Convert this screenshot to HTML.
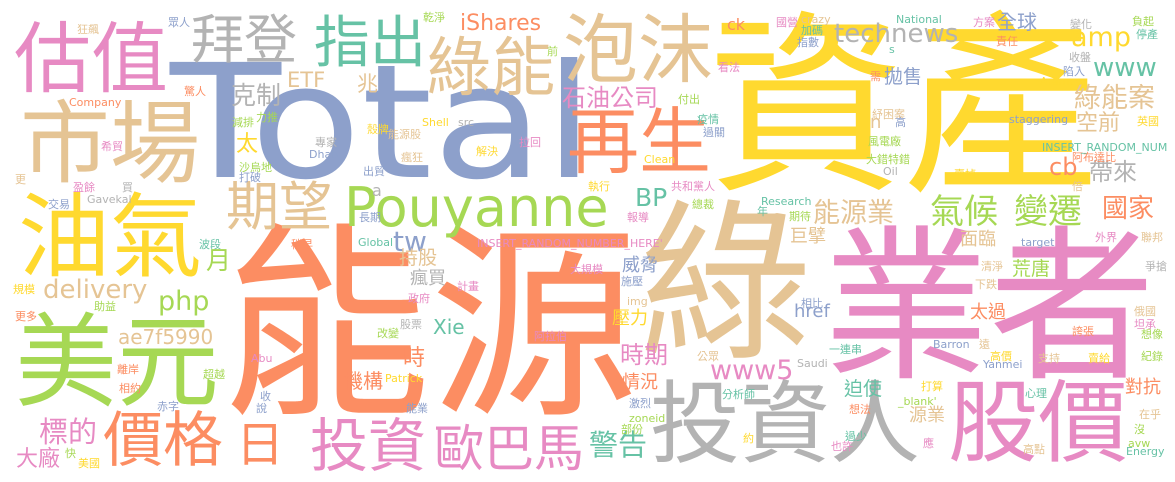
<!DOCTYPE html>
<html><head><meta charset="utf-8"><style>
html,body{margin:0;padding:0;background:#fff;}
#c{position:relative;width:1175px;height:482px;overflow:hidden;background:#fff;}
.w{position:absolute;line-height:1;white-space:nowrap;font-family:"Noto Sans CJK TC","Noto Sans CJK SC",sans-serif;}
.l{position:absolute;line-height:1;white-space:nowrap;font-family:"DejaVu Sans","Liberation Sans",sans-serif;}
.t{color:#66c2a5}.o{color:#fc8d62}.b{color:#8da0cb}.p{color:#e78ac3}.g{color:#a6d854}.y{color:#ffd92f}.n{color:#e5c494}.r{color:#b3b3b3}
.s{font-size:11px}
</style></head><body><div id="c">
<span class="l b" style="left:170px;top:44px;font-size:158px;transform:scaleX(1.15);transform-origin:0 0">Total</span>
<span class="w y" style="left:708px;top:-6px;font-size:195px;">資產</span>
<span class="w o" style="left:222px;top:204px;font-size:208px;">能源</span>
<span class="w n" style="left:640px;top:183px;font-size:172px;">綠</span>
<span class="w p" style="left:823px;top:210px;font-size:166px;">業者</span>
<span class="w p" style="left:14px;top:15px;font-size:77px;">估值</span>
<span class="w n" style="left:20px;top:91px;font-size:90px;">市場</span>
<span class="w r" style="left:191px;top:10px;font-size:53px;">拜登</span>
<span class="w t" style="left:314px;top:11px;font-size:56px;">指出</span>
<span class="l o" style="left:460px;top:13px;font-size:22px;">iShares</span>
<span class="w n" style="left:427px;top:31px;font-size:64px;">綠能</span>
<span class="w n" style="left:563px;top:6px;font-size:75px;">泡沫</span>
<span class="w o" style="left:567px;top:100px;font-size:72px;">再生</span>
<span class="w p" style="left:562px;top:84px;font-size:24px;">石油公司</span>
<span class="l n" style="left:287px;top:70px;font-size:21px;">ETF</span>
<span class="w n" style="left:357px;top:73px;font-size:21px;">兆</span>
<span class="w r" style="left:231px;top:82px;font-size:25px;">克制</span>
<span class="w y" style="left:236px;top:131px;font-size:22px;">太</span>
<span class="w y" style="left:18px;top:184px;font-size:92px;">油氣</span>
<span class="w n" style="left:226px;top:177px;font-size:53px;">期望</span>
<span class="l g" style="left:344px;top:181px;font-size:54px;">Pouyanne</span>
<span class="l b" style="left:393px;top:228px;font-size:28px;">tw</span>
<span class="w g" style="left:15px;top:304px;font-size:102px;">美元</span>
<span class="w g" style="left:206px;top:247px;font-size:25px;">月</span>
<span class="l n" style="left:43px;top:277px;font-size:26px;">delivery</span>
<span class="l g" style="left:158px;top:288px;font-size:27px;">php</span>
<span class="l n" style="left:118px;top:327px;font-size:20px;">ae7f5990</span>
<span class="w n" style="left:399px;top:247px;font-size:19px;">持股</span>
<span class="w r" style="left:410px;top:268px;font-size:18px;">瘋買</span>
<span class="l t" style="left:433px;top:317px;font-size:20px;">Xie</span>
<span class="w o" style="left:403px;top:345px;font-size:22px;">時</span>
<span class="w o" style="left:343px;top:370px;font-size:20px;">機構</span>
<span class="w p" style="left:39px;top:416px;font-size:29px;">標的</span>
<span class="w p" style="left:16px;top:446px;font-size:22px;">大廠</span>
<span class="w o" style="left:103px;top:406px;font-size:60px;">價格</span>
<span class="w o" style="left:236px;top:416px;font-size:48px;">日</span>
<span class="w p" style="left:310px;top:412px;font-size:58px;">投資</span>
<span class="w p" style="left:434px;top:420px;font-size:50px;">歐巴馬</span>
<span class="w t" style="left:589px;top:429px;font-size:29px;">警告</span>
<span class="w r" style="left:650px;top:371px;font-size:90px;">投資人</span>
<span class="w p" style="left:948px;top:370px;font-size:90px;">股價</span>
<span class="w n" style="left:790px;top:226px;font-size:18px;">巨擘</span>
<span class="w n" style="left:960px;top:229px;font-size:18px;">面臨</span>
<span class="w b" style="left:622px;top:255px;font-size:18px;">威脅</span>
<span class="w y" style="left:612px;top:308px;font-size:18px;">壓力</span>
<span class="w p" style="left:620px;top:341px;font-size:24px;">時期</span>
<span class="l p" style="left:710px;top:357px;font-size:27px;">www5</span>
<span class="w o" style="left:622px;top:372px;font-size:18px;">情況</span>
<span class="l b" style="left:794px;top:303px;font-size:18px;">href</span>
<span class="w o" style="left:970px;top:302px;font-size:18px;">太過</span>
<span class="w g" style="left:1012px;top:258px;font-size:19px;">荒唐</span>
<span class="w t" style="left:844px;top:378px;font-size:19px;">迫使</span>
<span class="w n" style="left:909px;top:405px;font-size:18px;">源業</span>
<span class="w o" style="left:1125px;top:377px;font-size:18px;">對抗</span>
<span class="l r" style="left:834px;top:21px;font-size:26px;">technews</span>
<span class="w b" style="left:997px;top:11px;font-size:20px;">全球</span>
<span class="l y" style="left:1071px;top:24px;font-size:27px;">amp</span>
<span class="l o" style="left:727px;top:17px;font-size:16px;">ck</span>
<span class="w b" style="left:884px;top:66px;font-size:19px;">拋售</span>
<span class="l t" style="left:1093px;top:55px;font-size:26px;">www</span>
<span class="w n" style="left:1074px;top:82px;font-size:27px;">綠能案</span>
<span class="w n" style="left:1076px;top:110px;font-size:22px;">空前</span>
<span class="l n" style="left:870px;top:114px;font-size:18px;">n</span>
<span class="l o" style="left:1049px;top:155px;font-size:24px;">cb</span>
<span class="w r" style="left:1089px;top:158px;font-size:24px;">帶來</span>
<span class="l t" style="left:635px;top:185px;font-size:25px;">BP</span>
<span class="w n" style="left:813px;top:197px;font-size:27px;">能源業</span>
<span class="w g" style="left:930px;top:192px;font-size:34px;">氣候</span>
<span class="w g" style="left:1014px;top:192px;font-size:34px;">變遷</span>
<span class="w o" style="left:1102px;top:194px;font-size:26px;">國家</span>
<span class="l r" style="left:372px;top:183px;font-size:16px;">a</span>
<span class="l p" style="left:477px;top:238px;font-size:11px;">INSERT_RANDOM_NUMBER_HERE'</span>
<span class="w n s" style="left:77px;top:24px">狂飆</span>
<span class="w b s" style="left:168px;top:17px">眾人</span>
<span class="w g s" style="left:423px;top:12px">乾淨</span>
<span class="w g s" style="left:547px;top:46px">前</span>
<span class="w o s" style="left:184px;top:86px">驚人</span>
<span class="l o s" style="left:69px;top:97px">Company</span>
<span class="w g s" style="left:232px;top:117px">減排</span>
<span class="w g s" style="left:256px;top:112px">力推</span>
<span class="w y s" style="left:367px;top:124px">殼牌</span>
<span class="l y s" style="left:422px;top:117px">Shell</span>
<span class="l r s" style="left:458px;top:117px">src</span>
<span class="w n s" style="left:388px;top:129px">能源股</span>
<span class="w r s" style="left:315px;top:137px">專家</span>
<span class="l b s" style="left:309px;top:149px">Dhabi</span>
<span class="w n s" style="left:401px;top:152px">瘋狂</span>
<span class="w y s" style="left:476px;top:146px">解決</span>
<span class="w p s" style="left:519px;top:137px">拉回</span>
<span class="w p s" style="left:101px;top:141px">希貿</span>
<span class="w g s" style="left:239px;top:162px">沙烏地</span>
<span class="w b s" style="left:239px;top:172px">打破</span>
<span class="w b s" style="left:363px;top:166px">出貿</span>
<span class="w n s" style="left:15px;top:174px">更</span>
<span class="w p s" style="left:73px;top:182px">盈餘</span>
<span class="w r s" style="left:122px;top:182px">買</span>
<span class="w b s" style="left:48px;top:199px">交易</span>
<span class="l r s" style="left:87px;top:194px">Gavekal</span>
<span class="w b s" style="left:359px;top:212px">長期</span>
<span class="l t s" style="left:358px;top:237px">Global</span>
<span class="w t s" style="left:199px;top:239px">波段</span>
<span class="w o s" style="left:291px;top:239px">稍早</span>
<span class="w y s" style="left:13px;top:284px">規模</span>
<span class="w g s" style="left:94px;top:301px">助益</span>
<span class="w o s" style="left:15px;top:311px">更多</span>
<span class="l y s" style="left:385px;top:373px">Patrick</span>
<span class="l p s" style="left:251px;top:353px">Abu</span>
<span class="w g s" style="left:377px;top:328px">改變</span>
<span class="w r s" style="left:400px;top:319px">股票</span>
<span class="w p s" style="left:534px;top:331px">阿拉伯</span>
<span class="w p s" style="left:408px;top:293px">政府</span>
<span class="w p s" style="left:457px;top:281px">計畫</span>
<span class="w p s" style="left:570px;top:264px">大規模</span>
<span class="w o s" style="left:117px;top:364px">離岸</span>
<span class="w o s" style="left:119px;top:383px">相約</span>
<span class="w g s" style="left:203px;top:369px">超越</span>
<span class="w b s" style="left:260px;top:391px">收</span>
<span class="w b s" style="left:256px;top:403px">說</span>
<span class="w b s" style="left:157px;top:401px">赤字</span>
<span class="w b s" style="left:406px;top:403px">能業</span>
<span class="w g s" style="left:65px;top:448px">快</span>
<span class="w y s" style="left:78px;top:458px">美國</span>
<span class="w b s" style="left:621px;top:276px">施壓</span>
<span class="l n s" style="left:627px;top:296px">img</span>
<span class="w b s" style="left:629px;top:398px">激烈</span>
<span class="l g s" style="left:629px;top:413px">zoneid</span>
<span class="w g s" style="left:621px;top:424px">部份</span>
<span class="w b s" style="left:801px;top:298px">相比</span>
<span class="w t s" style="left:829px;top:344px">一連串</span>
<span class="l r s" style="left:797px;top:358px">Saudi</span>
<span class="w n s" style="left:697px;top:351px">公眾</span>
<span class="w n s" style="left:981px;top:261px">清淨</span>
<span class="w n s" style="left:975px;top:279px">下跌</span>
<span class="l g s" style="left:898px;top:396px">_blank'</span>
<span class="w y s" style="left:921px;top:381px">打算</span>
<span class="w o s" style="left:849px;top:404px">想法</span>
<span class="w t s" style="left:722px;top:389px">分析師</span>
<span class="w t s" style="left:845px;top:431px">過少</span>
<span class="w p s" style="left:831px;top:441px">也許</span>
<span class="w y s" style="left:743px;top:433px">約</span>
<span class="w p s" style="left:923px;top:438px">應</span>
<span class="l b s" style="left:933px;top:339px">Barron</span>
<span class="l b s" style="left:983px;top:359px">Yanmei</span>
<span class="w n s" style="left:979px;top:339px">遠</span>
<span class="w y s" style="left:990px;top:351px">高價</span>
<span class="w o s" style="left:1072px;top:326px">誇張</span>
<span class="w n s" style="left:1038px;top:353px">支持</span>
<span class="w y s" style="left:1088px;top:353px">賣給</span>
<span class="w t s" style="left:1025px;top:388px">心理</span>
<span class="w n s" style="left:1023px;top:444px">高點</span>
<span class="l b s" style="left:1021px;top:237px">target</span>
<span class="w p s" style="left:1095px;top:232px">外界</span>
<span class="w n s" style="left:1141px;top:232px">聯邦</span>
<span class="w r s" style="left:1145px;top:261px">爭搶</span>
<span class="w n s" style="left:1134px;top:306px">俄國</span>
<span class="w p s" style="left:1134px;top:319px">坦承</span>
<span class="w g s" style="left:1141px;top:329px">想像</span>
<span class="w g s" style="left:1141px;top:351px">紀錄</span>
<span class="w n s" style="left:1139px;top:409px">在乎</span>
<span class="w g s" style="left:1134px;top:424px">沒</span>
<span class="l g s" style="left:1128px;top:438px">avw</span>
<span class="l t s" style="left:1126px;top:446px">Energy</span>
<span class="w p s" style="left:776px;top:17px">國營</span>
<span class="l n s" style="left:801px;top:14px">crazy</span>
<span class="w t s" style="left:801px;top:25px">加碼</span>
<span class="w b s" style="left:797px;top:37px">指數</span>
<span class="w p s" style="left:973px;top:17px">方案</span>
<span class="w r s" style="left:1070px;top:19px">變化</span>
<span class="w g s" style="left:1132px;top:16px">負起</span>
<span class="w t s" style="left:1136px;top:29px">停產</span>
<span class="w o s" style="left:996px;top:36px">責任</span>
<span class="w r s" style="left:1069px;top:52px">收盤</span>
<span class="w b s" style="left:1063px;top:66px">陷入</span>
<span class="l y s" style="left:1040px;top:76px">Aramco</span>
<span class="w y s" style="left:1137px;top:116px">英國</span>
<span class="l t s" style="left:889px;top:44px">s</span>
<span class="l t s" style="left:896px;top:14px">National</span>
<span class="w p s" style="left:718px;top:62px">看法</span>
<span class="w o s" style="left:870px;top:71px">需</span>
<span class="w g s" style="left:678px;top:94px">付出</span>
<span class="w n s" style="left:872px;top:109px">紓困案</span>
<span class="w b s" style="left:895px;top:117px">高</span>
<span class="w t s" style="left:697px;top:114px">疫情</span>
<span class="w b s" style="left:703px;top:127px">過關</span>
<span class="w g s" style="left:868px;top:136px">風電廠</span>
<span class="l y s" style="left:644px;top:154px">Clean</span>
<span class="w g s" style="left:866px;top:154px">大錯特錯</span>
<span class="l r s" style="left:883px;top:166px">Oil</span>
<span class="w y s" style="left:588px;top:181px">執行</span>
<span class="w p s" style="left:671px;top:181px">共和黨人</span>
<span class="w y s" style="left:954px;top:169px">賣掉</span>
<span class="w n s" style="left:1072px;top:181px">倍</span>
<span class="w o s" style="left:1072px;top:152px">阿布達比</span>
<span class="l t s" style="left:1042px;top:142px">INSERT_RANDOM_NUM</span>
<span class="l b s" style="left:1009px;top:114px">staggering</span>
<span class="w g s" style="left:692px;top:199px">總裁</span>
<span class="l t s" style="left:761px;top:196px">Research</span>
<span class="w t s" style="left:757px;top:206px">年</span>
<span class="w g s" style="left:789px;top:211px">期待</span>
<span class="w p s" style="left:627px;top:212px">報導</span>
</div></body></html>
